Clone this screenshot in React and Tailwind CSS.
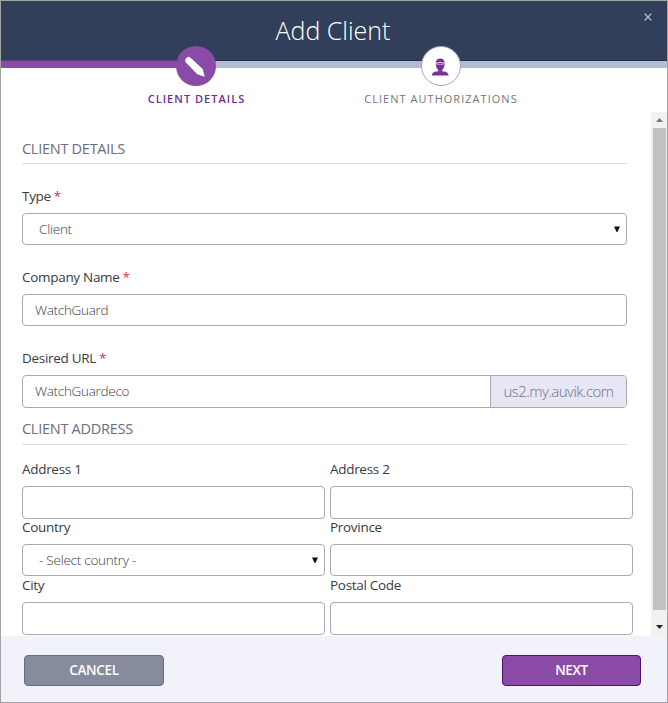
function Heading({ children, className }) {
  return (
    <h2 className={`w-[605px] border-b border-[#dcdcde] text-[14.5px] leading-[22px] tracking-[-0.27px] text-[#6b6c7e] ${className}`}>
      {children}
    </h2>
  );
}

function Label({ children, required }) {
  return (
    <div className="h-5 text-[13.5px] leading-5 tracking-[-0.3px] text-[#3a3a42]">
      {children}
      {required && <span className="ml-[3px] text-[#e0263c]">*</span>}
    </div>
  );
}

function Arrow() {
  return (
    <svg width="6" height="6" viewBox="0 0 6 6" className="block">
      <path d="M0 .5h6L3.400 6h-.8z" fill="#111" />
    </svg>
  );
}

function Select({ children }) {
  return (
    <div className="flex h-8 items-center justify-between rounded-[4px] border border-[#a9a9b2] bg-white pr-[6px] pl-4 text-[13.5px] font-light tracking-[-0.25px] text-[#3c3c44]">
      <span className="pt-px">{children}</span>
      <Arrow />
    </div>
  );
}

function Input({ children, className = "h-8" }) {
  return (
    <div className={`flex items-center rounded-[4px] border border-[#a9a9b2] bg-white pl-3 text-[13.5px] font-light tracking-[-0.3px] text-[#3c3c44] ${className}`}>
      {children}
    </div>
  );
}

export default function App() {
  return (
    <div className="flex h-[703px] w-[668px] flex-col border border-[#a3a3a3] bg-white font-['Open_Sans','Noto_Sans',sans-serif]">
      <header className="relative h-[59px] shrink-0 bg-[#323f5a] text-center">
        <h1 className="pt-[11px] pr-[2px] text-[25px] leading-[36px] font-light text-white">Add Client</h1>
        <svg className="absolute top-[12px] right-[15px]" width="8" height="8" viewBox="0 0 8 8">
          <path d="M.7.7l6.6 6.6M7.3.7L.7 7.3" stroke="#c5cbe2" strokeWidth="1.2" />
        </svg>
      </header>

      <div className="relative flex h-2 shrink-0 border-t border-[#252c4c] bg-[#b5bbd0]">
        <div className="-mt-px h-2 w-[195px] border-t border-[#5a3d80] bg-[#8a4ba6]" />
        <div className="absolute top-[-15px] left-[175px] flex size-10 items-center justify-center rounded-full bg-[#8a4ba6]">
          <svg width="40" height="40" viewBox="0 0 40 40">
            <path d="M9.800 12.800q2-2.900 4.200-1.600l12.700 11.800 2 7.700-7.400-2.500L9.900 16.500q-1.700-1.700-.1-3.700z" fill="#fff" />
          </svg>
        </div>
        <div className="absolute top-[-15px] left-[420px] flex size-10 items-center justify-center rounded-full border border-[#a3a5bd] bg-white">
          <svg width="18" height="18" viewBox="0 0 18 18" className="relative top-px right-px">
            <path d="M4.800 5C5 2 6.500.6 9.200.6S13.400 2 13.600 5v1.800C13.500 9 12.400 11 11.200 12v1.300c3 .3 6.300 1 6.300 4.200H.9c0-3.200 3.300-3.900 6.300-4.200V12C6 11 4.900 9 4.800 6.800z" fill="#74349a" />
            <path d="M5 5.400Q9.200 3.500 13.400 5.400" stroke="#e6d2f2" strokeWidth="1.100" fill="none" />
            <path d="M5.500 6.500h7.400" stroke="#cda9df" strokeWidth=".7" fill="none" />
          </svg>
        </div>
      </div>

      <div className="flex h-[43px] shrink-0 pt-[23px] text-[11px] leading-4 tracking-[1.03px]">
        <div className="ml-[75px] w-[241px] text-center font-semibold text-[#6c2f91]">CLIENT DETAILS</div>
        <div className="w-[248px] text-center text-[#74747c]">CLIENT AUTHORIZATIONS</div>
      </div>

      <div className="flex h-[525px] shrink-0 justify-between">
        <div className="pl-[21px]">
          <Heading className="h-[53px] pt-[27px]">CLIENT DETAILS</Heading>
          <div className="flex w-[605px] flex-col pt-[22px]">
            <Label required>Type</Label>
            <div className="mt-[7px] mb-[22px]"><Select>Client</Select></div>
            <Label required>Company Name</Label>
            <div className="mt-[7px] mb-[22px]"><Input>WatchGuard</Input></div>
            <Label required>Desired URL</Label>
            <div className="mt-[7px] flex h-[33px] rounded-[4px] border border-[#a9a9b2] text-[13.5px] font-light tracking-[-0.3px] text-[#3c3c44]">
              <div className="flex flex-1 items-center pl-3">WatchGuardeco</div>
              <div className="flex w-[136px] items-center justify-center rounded-r-[3px] border-l border-[#a9a9b2] bg-[#e6e6f5] text-[15px] tracking-[-0.55px] text-[#6f7085]">
                us2.my.auvik.com
              </div>
            </div>
          </div>
          <Heading className="h-[37px] pt-[10px]">CLIENT ADDRESS</Heading>
          <div className="grid w-[611px] grid-cols-2 gap-x-[5px] pt-[14px]">
            <div>
              <Label>Address 1</Label>
              <Input className="mt-[7px] h-[33px]" />
            </div>
            <div>
              <Label>Address 2</Label>
              <Input className="mt-[7px] h-[33px]" />
            </div>
            <div className="-mt-[2px]">
              <Label>Country</Label>
              <div className="mt-[7px]"><Select>- Select country -</Select></div>
            </div>
            <div className="-mt-[2px]">
              <Label>Province</Label>
              <Input className="mt-[7px] h-8" />
            </div>
            <div className="-mt-px">
              <Label>City</Label>
              <Input className="mt-[7px] h-[33px]" />
            </div>
            <div className="-mt-px">
              <Label>Postal Code</Label>
              <Input className="mt-[7px] h-[33px]" />
            </div>
          </div>
        </div>
        <div className="mt-px flex w-4 flex-col items-center justify-between bg-[#f1f1f1]">
          <div className="flex h-4 items-center">
            <svg width="7" height="4" viewBox="0 0 7 4"><path d="M0 4h7L3.500 0z" fill="#777" /></svg>
          </div>
          <div className="w-[13px] flex-1 bg-[#c1c1c1]" />
          <div className="flex h-[26px] items-center pt-[7px]">
            <svg width="7" height="4" viewBox="0 0 7 4"><path d="M0 0h7L3.500 4z" fill="#222" /></svg>
          </div>
        </div>
      </div>

      <footer className="flex flex-1 items-start justify-between bg-[#f2f3fa] pt-[19px] pr-[26px] pl-[23px] text-[13.5px] font-semibold text-white">
        <button className="h-[31px] w-[140px] rounded-[4px] border border-[#696d84] bg-[#868c9c] pb-px tracking-[-0.35px]">CANCEL</button>
        <button className="h-[31px] w-[139px] rounded-[4px] border border-[#4b1470] bg-[#8a4ba6] pb-px tracking-[-0.35px]">NEXT</button>
      </footer>
    </div>
  );
}
